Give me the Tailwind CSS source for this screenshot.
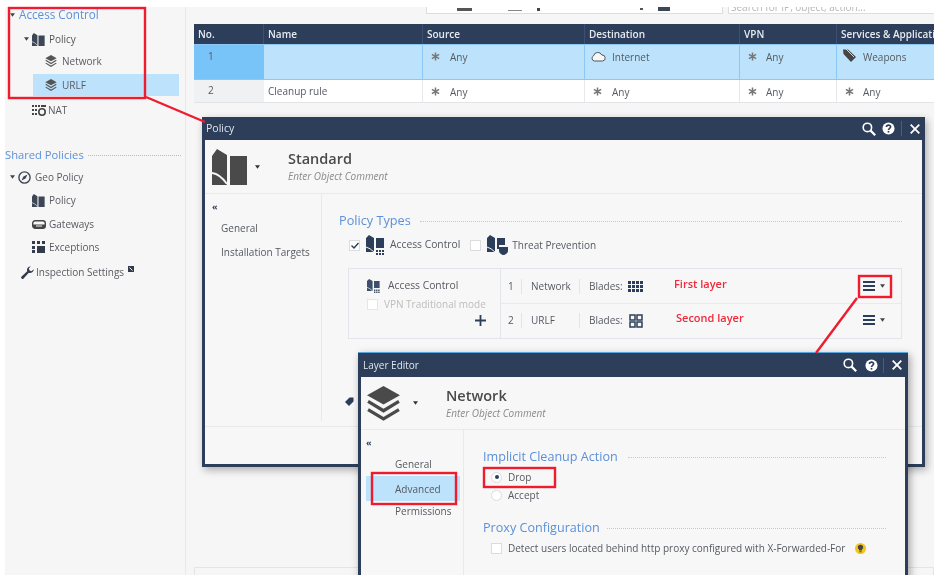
<!DOCTYPE html>
<html>
<head>
<meta charset="utf-8">
<script src="https://cdn.jsdelivr.net/npm/@tailwindcss/browser@4"></script>
</head>
<body class="m-0 bg-white">
<svg width="0" height="0" class="absolute">
  <defs>
    <symbol id="book" viewBox="0 0 36 36"><path fill="currentColor" d="M0 7 L5 0 L15 6 V36 H0 Z M18 7 H35 V36 H18 Z"/><path fill="none" stroke="#f6f6f6" stroke-width="1.8" d="M0 24 Q8 25 15 35"/></symbol>
    <symbol id="acp" viewBox="0 0 20 20"><path fill="currentColor" d="M0 3 L3 0 L8 3 V17 H0 Z M10 3 H18 V13 H10 Z M10 15h2v2h-2zM13 15h2v2h-2zM16 15h2v2h-2zM10 18h2v2h-2zM13 18h2v2h-2zM16 18h2v2h-2z"/><path fill="none" stroke="#f6f6f6" d="M0 12 Q4 13 8 17"/></symbol>
    <symbol id="layers" viewBox="0 0 32 34"><path fill="currentColor" d="M16 0 L32 9 L16 18 L0 9 Z"/><path fill="none" stroke="currentColor" stroke-width="3.2" d="M1 15 L16 24 L31 15 M1 23 L16 32 L31 23"/></symbol>
    <symbol id="caret" viewBox="0 0 6 4"><path fill="currentColor" d="M0 0 H6 L3 4 Z"/></symbol>
    <symbol id="any" viewBox="0 0 10 10"><path stroke="currentColor" stroke-width="1.7" fill="none" d="M5 0.5 V9.5 M1 2.7 L9 7.3 M9 2.7 L1 7.3"/></symbol>
    <symbol id="search" viewBox="0 0 14 14"><circle cx="5.4" cy="5.4" r="4.2" fill="none" stroke="currentColor" stroke-width="1.6"/><path stroke="currentColor" stroke-width="2.2" d="M8.6 8.6 L13.2 13.2"/></symbol>
    <symbol id="help" viewBox="0 0 14 14"><circle cx="7" cy="7" r="6.5" fill="currentColor"/><path fill="none" stroke="#2c3e59" stroke-width="1.8" d="M4.8 5.3 C4.8 2.8 9.3 2.8 9.3 5.2 C9.3 6.8 7 6.8 7 8.6"/><rect x="6.1" y="9.6" width="1.8" height="1.8" fill="#2c3e59"/></symbol>
    <symbol id="close" viewBox="0 0 10 10"><path stroke="currentColor" stroke-width="1.8" d="M0.7 0.7 L9.3 9.3 M9.3 0.7 L0.7 9.3"/></symbol>
    <symbol id="menu" viewBox="0 0 12 10"><path stroke="currentColor" stroke-width="1.8" d="M0 1 H12 M0 5 H12 M0 9 H12"/></symbol>
  </defs>
</svg>

<div class="relative w-[934px] h-[575px] overflow-hidden bg-white blur-[0.4px] font-['Open_Sans','Noto_Sans',sans-serif] text-[#555a60]">

  <div class="absolute inset-0 pt-[7px] flex">
    <div class="w-[5px] bg-white"></div>

    <!-- Sidebar -->
    <aside class="w-[181px] shrink-0 h-full bg-[#f6f6f6] border-r border-[#e9e9e9] text-[10px] text-[#5a5a62]">
      <div class="h-[16px] flex items-center pl-[5px] gap-[4px]">
        <svg class="w-[5px] h-[4px] text-[#444]"><use href="#caret"/></svg>
        <span class="text-[11.7px] text-[#5c90d8]">Access Control</span>
      </div>
      <div class="h-[22px] mt-[5px] flex items-center pl-[19px] text-[#555]">
        <svg class="w-[5px] h-[4px] text-[#444]"><use href="#caret"/></svg>
        <svg class="w-[13px] h-[13px] ml-[3px] text-[#3d4654]"><use href="#book"/></svg>
        <span class="ml-[4px]">Policy</span>
      </div>
      <div class="h-[22px] flex items-center pl-[40px] gap-[5px]">
        <svg class="w-[12px] h-[12px] text-[#555]"><use href="#layers"/></svg><span>Network</span>
      </div>
      <div class="h-[22px] mt-[2px] ml-[28px] mr-[6px] flex items-center pl-[12px] gap-[5px] bg-[#bce2fc]">
        <svg class="w-[12px] h-[12px] text-[#555]"><use href="#layers"/></svg><span>URLF</span>
      </div>
      <div class="h-[22px] mt-[3px] flex items-center pl-[27px] gap-[2px]">
        <svg class="w-[14px] h-[11px] text-[#444]" viewBox="0 0 14 11"><path fill="currentColor" d="M0 0h2v2H0zM3 0h2v2H3zM6 0h2v2H6zM0 4h2v2H0zM3 4h2v2H3zM0 8h2v2H0zM3 8h2v2H3zM9 0h5v2H9z"/><circle cx="10" cy="7" r="3.2" fill="none" stroke="currentColor" stroke-width="1.6"/></svg>
        <span>NAT</span>
      </div>
      <div class="h-[22px] mt-[23px] flex items-center gap-[4px] pr-[4px]">
        <span class="text-[11.2px] text-[#5c90d8] whitespace-nowrap">Shared Policies</span>
        <span class="flex-1 border-t border-dotted border-[#bbb]"></span>
      </div>
      <div class="h-[22px] flex items-center pl-[5px]">
        <svg class="w-[5px] h-[4px] text-[#444]"><use href="#caret"/></svg>
        <svg class="w-[13px] h-[13px] ml-[3px] text-[#3d4654]" viewBox="0 0 13 13"><circle cx="6.5" cy="6.5" r="5.6" fill="none" stroke="currentColor" stroke-width="1.4"/><path fill="currentColor" d="M9.5 3.5 L7.6 7.6 L5.4 5.4 Z M3.5 9.5 L5.4 5.4 L7.6 7.6 Z"/></svg>
        <span class="ml-[4px]">Geo Policy</span>
      </div>
      <div class="h-[22px] mt-[1px] flex items-center pl-[27px] gap-[4px]">
        <svg class="w-[13px] h-[13px] text-[#3d4654]"><use href="#book"/></svg><span>Policy</span>
      </div>
      <div class="h-[22px] mt-[2px] flex items-center pl-[27px] gap-[3px]">
        <svg class="w-[14px] h-[9px] text-[#444]" viewBox="0 0 14 9"><rect x="0.7" y="0.7" width="12.6" height="7.6" rx="2.5" fill="none" stroke="currentColor" stroke-width="1.4"/><path fill="currentColor" d="M1 4.5H13V8H1z"/><path stroke="#f6f6f6" d="M4 6H10"/></svg>
        <span>Gateways</span>
      </div>
      <div class="h-[22px] mt-[1px] flex items-center pl-[27px] gap-[4px]">
        <svg class="w-[13px] h-[12px] text-[#333c4a]" viewBox="0 0 13 12"><path fill="currentColor" d="M0 0h3v3H0zM5 0h3v3H5zM10 0h3v3h-3zM0 5h3v3H0zM0 9h3v3H0zM5 5h8v7H5z"/></svg>
        <span>Exceptions</span>
      </div>
      <div class="h-[22px] mt-[3px] flex items-center pl-[16px] gap-[3px]">
        <svg class="w-[13px] h-[13px] text-[#333c4a]" viewBox="0 0 13 13"><path fill="currentColor" d="M12.8 3.2 A3.8 3.8 0 0 1 7.8 6.8 L2.6 12.4 A1.3 1.3 0 0 1 0.6 10.4 L6.2 5.2 A3.8 3.8 0 0 1 9.8 0.2 L7.8 2.6 L8.6 4.4 L10.4 5.2 Z"/></svg>
        <span class="-ml-[1px]">Inspection Settings</span>
        <svg class="w-[6px] h-[6px] -mt-[7px] ml-[1px] text-[#333c4a]" viewBox="0 0 6 6"><path fill="currentColor" d="M0 0H6V6H0Z"/><path stroke="#f6f6f6" d="M1.5 1.5L4.5 4.5"/></svg>
      </div>
    </aside>

    <!-- Main -->
    <main class="flex-1 bg-[#f6f6f6] min-w-0">
      <div class="h-[8px] flex">
        <div class="ml-[240px] shrink-0 w-[297px] h-[7px] bg-white border-x border-b border-[#ddd] flex items-start overflow-hidden pl-[30px]">
          <span class="w-[15px] h-[3px] bg-[#555] mt-[1px]"></span>
          <span class="w-[14px] h-[1px] bg-[#888] mt-[3px] ml-[36px]"></span>
          <span class="w-[3px] h-[3px] bg-[#444] mt-[1px] ml-[15px]"></span>
          <span class="w-[3px] h-[2px] bg-[#555] mt-[1px] ml-[100px]"></span>
          <span class="w-[12px] h-[4px] bg-[#3d4654] ml-[15px]"></span>
        </div>
        <div class="ml-[5px] flex-1 h-[7px] bg-white border-l border-b border-[#ddd] overflow-hidden">
          <div class="text-[10px] leading-[10px] -mt-[5px] pl-[2px] text-[#b5b5b5] whitespace-nowrap">Search for IP, object, action...</div>
        </div>
      </div>

      <div class="ml-[8px] mt-[9px] text-[10px] overflow-hidden">
        <div class="h-[20px] flex bg-[#2c3e59] text-[#e6ebf2] font-semibold text-[10px] items-center whitespace-nowrap">
          <div class="w-[70px] shrink-0 pl-[4px] pt-[1px] border-r border-[#3c5072] h-full flex items-center">No.</div>
          <div class="w-[159px] shrink-0 pl-[4px] pt-[1px] border-r border-[#3c5072] h-full flex items-center">Name</div>
          <div class="w-[162px] shrink-0 pl-[4px] pt-[1px] border-r border-[#3c5072] h-full flex items-center">Source</div>
          <div class="w-[155px] shrink-0 pl-[4px] pt-[1px] border-r border-[#3c5072] h-full flex items-center">Destination</div>
          <div class="w-[97px] shrink-0 pl-[4px] pt-[1px] border-r border-[#3c5072] h-full flex items-center">VPN</div>
          <div class="shrink-0 pl-[4px] pt-[1px] h-full flex items-center">Services &amp; Applications</div>
        </div>
        <div class="h-[36px] flex bg-[#bce2fc] border-y border-[#8cc8f5] whitespace-nowrap">
          <div class="w-[70px] shrink-0 bg-[#78c3f8] pl-[14px] pt-[4px]">1</div>
          <div class="w-[159px] shrink-0 border-r border-[#8cc8f5]"></div>
          <div class="w-[162px] shrink-0 border-r border-[#8cc8f5] pl-[8px] pt-[5px] flex items-start gap-[10px]"><svg class="w-[9px] h-[9px] mt-[2px] text-[#777]"><use href="#any"/></svg>Any</div>
          <div class="w-[155px] shrink-0 border-r border-[#8cc8f5] pl-[6px] pt-[5px] flex items-start gap-[6px]">
            <svg class="w-[15px] h-[11px] mt-[1px] text-[#555]" viewBox="0 0 15 11"><path fill="#f4f8fb" stroke="currentColor" d="M3.5 10 A2.7 2.7 0 0 1 2.5 4.9 A4.4 4.4 0 0 1 10.8 4 A3 3 0 0 1 11.5 10 Z"/></svg>
            Internet
          </div>
          <div class="w-[97px] shrink-0 border-r border-[#8cc8f5] pl-[8px] pt-[5px] flex items-start gap-[9px]"><svg class="w-[9px] h-[9px] mt-[2px] text-[#777]"><use href="#any"/></svg>Any</div>
          <div class="shrink-0 pl-[6px] pt-[4px] flex items-start gap-[6px]">
            <svg class="w-[14px] h-[13px] text-[#444]" viewBox="0 0 14 13"><path fill="currentColor" d="M0 0.5 H5 L13 8 L8 13 L0.5 5 Z"/><path fill="none" stroke="#bce2fc" d="M3 0 L11 8"/></svg>
            <span class="pt-[1px]">Weapons</span>
          </div>
        </div>
        <div class="h-[23px] flex bg-white border-b border-[#e2e4e8] whitespace-nowrap">
          <div class="w-[70px] shrink-0 bg-[#f0f1f3] pl-[14px] pt-[3px]">2</div>
          <div class="w-[159px] shrink-0 border-r border-[#e6e8ec] pl-[4px] pt-[4px]">Cleanup rule</div>
          <div class="w-[162px] shrink-0 border-r border-[#e6e8ec] pl-[8px] pt-[5px] flex items-start gap-[10px]"><svg class="w-[9px] h-[9px] mt-[2px] text-[#777]"><use href="#any"/></svg>Any</div>
          <div class="w-[155px] shrink-0 border-r border-[#e6e8ec] pl-[8px] pt-[5px] flex items-start gap-[10px]"><svg class="w-[9px] h-[9px] mt-[2px] text-[#777]"><use href="#any"/></svg>Any</div>
          <div class="w-[97px] shrink-0 border-r border-[#e6e8ec] pl-[8px] pt-[5px] flex items-start gap-[9px]"><svg class="w-[9px] h-[9px] mt-[2px] text-[#777]"><use href="#any"/></svg>Any</div>
          <div class="shrink-0 pl-[8px] pt-[5px] flex items-start gap-[9px]"><svg class="w-[9px] h-[9px] mt-[2px] text-[#777]"><use href="#any"/></svg>Any</div>
        </div>
        <div class="mt-[464px] h-[10px] border-t border-x border-[#e4e4e4]"></div>
      </div>
    </main>
  </div>

  <!-- Policy window -->
  <section class="absolute left-[202px] top-[117px] w-[723px] h-[350px] bg-[#f7f7f8] border-[3px] border-t-0 border-[#2c3e59] shadow-[2px_3px_8px_rgba(0,0,0,0.3)] text-[10px]">
    <header class="h-[23px] -mx-[3px] bg-[#2c3e59] text-[#e1e6ee] flex items-center pl-[4px] pr-[5px] text-[10.5px]">
      <span class="flex-1">Policy</span>
      <svg class="w-[14px] h-[14px] text-white"><use href="#search"/></svg>
      <svg class="w-[13px] h-[13px] ml-[6px] text-white"><use href="#help"/></svg>
      <span class="w-px h-[15px] bg-[#4b5d7a] ml-[6px]"></span>
      <svg class="w-[10px] h-[10px] ml-[8px] text-white"><use href="#close"/></svg>
    </header>
    <div class="h-[54px] border-b border-[#e8e9ec] flex items-center pl-[7px]">
      <svg class="w-[36px] h-[36px] text-[#4a4a4a]"><use href="#book"/></svg>
      <svg class="w-[5px] h-[4px] ml-[7px] text-[#333]"><use href="#caret"/></svg>
      <div class="ml-[28px]">
        <div class="text-[14.5px] font-semibold text-[#4a4a4a] leading-[19px] -mt-[2px]">Standard</div>
        <div class="text-[10px] italic text-[#8a8a8a] leading-[14px] mt-[1px]">Enter Object Comment</div>
      </div>
    </div>
    <div class="flex h-[233px] border-b border-[#e8e9ec]">
      <nav class="w-[117px] h-[227px] border-r border-[#e8e9ec] pl-[16px] pt-[7px]">
        <div class="-ml-[9px] text-[9px] leading-[12px] text-[#2c3e59] font-bold">«</div>
        <div class="mt-[3px] leading-[24px]">General</div>
        <div class="leading-[24px] whitespace-nowrap">Installation Targets</div>
      </nav>
      <div class="flex-1 pl-[17px] pr-[20px] pt-[17px]">
        <div class="flex items-center gap-[9px] h-[20px]">
          <span class="text-[12.7px] text-[#5c90d8] whitespace-nowrap">Policy Types</span>
          <span class="flex-1 border-t border-dotted border-[#c8c8c8]"></span>
        </div>
        <div class="flex items-center mt-[4px] pl-[10px] h-[20px]">
          <span class="w-[11px] h-[11px] bg-white border border-[#dcdcdc] flex items-center justify-center">
            <svg class="w-[8px] h-[7px]" viewBox="0 0 8 7"><path d="M0.5 3.5 L3 6 L7.5 1" fill="none" stroke="#2c3e59" stroke-width="1.4"/></svg>
          </span>
          <svg class="w-[20px] h-[20px] ml-[6px] text-[#2c3e59]"><use href="#acp"/></svg>
          <span class="ml-[4px] text-[10.3px]">Access Control</span>
          <span class="ml-[10px] w-[11px] h-[11px] bg-white border border-[#dcdcdc]"></span>
          <svg class="w-[21px] h-[20px] ml-[6px] text-[#2c3e59]" viewBox="0 0 21 20"><path fill="currentColor" d="M0 3 L3 0 L8 3 V17 H0 Z M10 3 H18 V10 H12 V14 H10 Z M12 12 H21 V16 C21 18 18 20 16.5 20 C15 20 12 18 12 16 Z"/><path fill="none" stroke="#f6f6f6" d="M0 12 Q4 13 8 17"/></svg>
          <span class="ml-[4px]">Threat Prevention</span>
        </div>
        <div class="ml-[9px] mt-[13px] h-[71px] border border-[#e2e5ea] flex">
          <div class="w-[152px] shrink-0 border-r border-[#e2e5ea] relative pl-[18px] pt-[9px]">
            <div class="flex items-center gap-[7px] h-[16px]">
              <svg class="w-[14px] h-[14px] text-[#3d4f6c]"><use href="#acp"/></svg>
              <span class="text-[10.3px]">Access Control</span>
            </div>
            <div class="flex items-center gap-[6px] mt-[2px] h-[16px] text-[#bdbdbd]">
              <span class="w-[11px] h-[11px] bg-white border border-[#e6e6e6]"></span>
              <span class="whitespace-nowrap">VPN Traditional mode</span>
            </div>
            <svg class="absolute right-[14px] bottom-[12px] w-[11px] h-[11px] text-[#2c3e59]" viewBox="0 0 11 11"><path stroke="currentColor" stroke-width="1.8" d="M5.5 0V11M0 5.5H11"/></svg>
          </div>
          <div class="flex-1 flex flex-col">
            <div class="h-[35px] border-b border-[#e8eaee] flex items-center relative">
              <span class="w-[21px] pl-[7px] h-[15px] border-r border-[#e4e4e4] leading-[15px]">1</span>
              <span class="w-[58px] pl-[9px] h-[15px] border-r border-[#e4e4e4] leading-[15px]">Network</span>
              <span class="ml-[9px]">Blades:</span>
              <svg class="w-[15px] h-[11px] ml-[5px] text-[#2c3e59]" viewBox="0 0 15 11"><path fill="currentColor" d="M0 0h3v3H0zM4 0h3v3H4zM8 0h3v3H8zM12 0h3v3h-3zM0 4h3v3H0zM4 4h3v3H4zM8 4h3v3H8zM12 4h3v3h-3zM0 8h3v3H0zM4 8h3v3H4zM8 8h3v3H8zM12 8h3v3h-3z"/></svg>
              <span class="absolute left-[173px] top-[7px] text-[11px] font-semibold text-[#f02a3a] whitespace-nowrap">First layer</span>
              <svg class="absolute right-[26px] top-[12px] w-[12px] h-[10px] text-[#2c3e59]"><use href="#menu"/></svg>
              <svg class="absolute right-[16px] top-[15px] w-[5px] h-[4px] text-[#444]"><use href="#caret"/></svg>
            </div>
            <div class="flex-1 flex items-center relative -mt-[1px]">
              <span class="w-[21px] pl-[7px] h-[15px] border-r border-[#e4e4e4] leading-[15px]">2</span>
              <span class="w-[58px] pl-[9px] h-[15px] border-r border-[#e4e4e4] leading-[15px]">URLF</span>
              <span class="ml-[9px]">Blades:</span>
              <svg class="w-[14px] h-[14px] ml-[6px] text-[#2c3e59]" viewBox="0 0 14 14"><path fill="none" stroke="currentColor" stroke-width="1.5" d="M1 1h5v5H1zM8 1h5v5H8zM1 8h5v5H1zM8 8h5v5H8z"/></svg>
              <span class="absolute left-[175px] top-[7px] text-[11px] font-semibold text-[#f02a3a] whitespace-nowrap">Second layer</span>
              <svg class="absolute right-[26px] top-[12px] w-[12px] h-[10px] text-[#2c3e59]"><use href="#menu"/></svg>
              <svg class="absolute right-[16px] top-[15px] w-[5px] h-[4px] text-[#444]"><use href="#caret"/></svg>
            </div>
          </div>
        </div>
        <svg class="mt-[58px] ml-[6px] w-[9px] h-[9px] text-[#2c3e59]" viewBox="0 0 9 9"><path fill="currentColor" d="M4.5 0.5 H8.5 V4.5 L4 9 L0 5 Z"/></svg>
      </div>
    </div>
  </section>

  <!-- Layer Editor window -->
  <section class="absolute left-[358px] top-[352px] w-[550px] h-[240px] bg-[#f7f7f8] border-[3px] border-t-0 border-[#2c3e59] shadow-[2px_3px_8px_rgba(0,0,0,0.35)] text-[10px]">
    <header class="h-[25px] -mx-[3px] bg-[#2c3e59] border-t border-[#5aa6dc] text-[#e1e6ee] flex items-center pl-[5px] pr-[6px] text-[10px]">
      <span class="flex-1">Layer Editor</span>
      <svg class="w-[14px] h-[14px] text-white"><use href="#search"/></svg>
      <svg class="w-[13px] h-[13px] ml-[8px] text-white"><use href="#help"/></svg>
      <span class="w-px h-[15px] bg-[#4b5d7a] ml-[5px]"></span>
      <svg class="w-[10px] h-[10px] ml-[8px] text-white"><use href="#close"/></svg>
    </header>
    <div class="h-[53px] border-b border-[#e8e9ec] flex items-center pl-[6px]">
      <svg class="w-[33px] h-[35px] text-[#4a4a4a]"><use href="#layers"/></svg>
      <svg class="w-[5px] h-[4px] ml-[13px] text-[#333]"><use href="#caret"/></svg>
      <div class="ml-[28px]">
        <div class="text-[14.5px] font-semibold text-[#4a4a4a] leading-[19px] -mt-[1px]">Network</div>
        <div class="text-[10px] italic text-[#8a8a8a] leading-[14px] mt-[1px]">Enter Object Comment</div>
      </div>
    </div>
    <div class="flex">
      <nav class="w-[103px] h-[162px] border-r border-[#e8e9ec] pt-[7px]">
        <div class="ml-[5px] text-[9px] leading-[12px] text-[#2c3e59] font-bold">«</div>
        <div class="ml-[34px] mt-[3px] leading-[24px]">General</div>
        <div class="ml-[5px] mr-[3px] pl-[29px] bg-[#bce2fc] leading-[24px] h-[25px] pt-[1px]">Advanced</div>
        <div class="ml-[34px] leading-[20px]">Permissions</div>
      </nav>
      <div class="flex-1 pl-[19px] pr-[19px] pt-[17px]">
        <div class="flex items-center gap-[10px] h-[20px]">
          <span class="text-[12.6px] text-[#5c90d8] whitespace-nowrap">Implicit Cleanup Action</span>
          <span class="flex-1 border-t border-dotted border-[#c8c8c8]"></span>
        </div>
        <div class="pl-[8px] mt-[1px] flex items-center h-[18px] gap-[6px]">
          <span class="w-[11px] h-[11px] rounded-full bg-white border border-[#dcdcdc] flex items-center justify-center"><span class="w-[4px] h-[4px] rounded-full bg-[#2c3e59]"></span></span>
          Drop
        </div>
        <div class="pl-[8px] flex items-center h-[18px] gap-[6px]">
          <span class="w-[11px] h-[11px] rounded-full bg-white border border-[#dcdcdc]"></span>
          Accept
        </div>
        <div class="flex items-center gap-[7px] h-[20px] mt-[14px]">
          <span class="text-[12.6px] text-[#5c90d8] whitespace-nowrap">Proxy Configuration</span>
          <span class="flex-1 border-t border-dotted border-[#c8c8c8]"></span>
        </div>
        <div class="pl-[8px] mt-[1px] flex items-center h-[18px] gap-[6px] whitespace-nowrap">
          <span class="w-[11px] h-[11px] bg-white border border-[#dcdcdc]"></span>
          <span>Detect users located behind http proxy configured with X-Forwarded-For</span>
          <svg class="w-[11px] h-[11px] ml-[4px]" viewBox="0 0 11 11"><circle cx="5.5" cy="5.5" r="5.5" fill="#f5c518"/><path fill="#444" d="M5.5 1.8 A2.6 2.6 0 0 1 7 6.6 V7.6 H4 V6.6 A2.6 2.6 0 0 1 5.5 1.8 Z M4.4 8.3 H6.6 V9.2 H4.4 Z"/></svg>
        </div>
      </div>
    </div>
  </section>

  <!-- Annotations -->
  <svg class="absolute inset-0 pointer-events-none" width="934" height="575" fill="none" stroke="#ee1c2e" stroke-width="2.4">
    <rect x="9" y="8" width="136" height="90"/>
    <path d="M146 97 L205 122"/>
    <rect x="859" y="276" width="32" height="21"/>
    <path d="M857 298 L816 353"/>
    <rect x="372" y="473" width="84" height="31"/>
    <rect x="484" y="468" width="71" height="19"/>
  </svg>
</div>
</body>
</html>
